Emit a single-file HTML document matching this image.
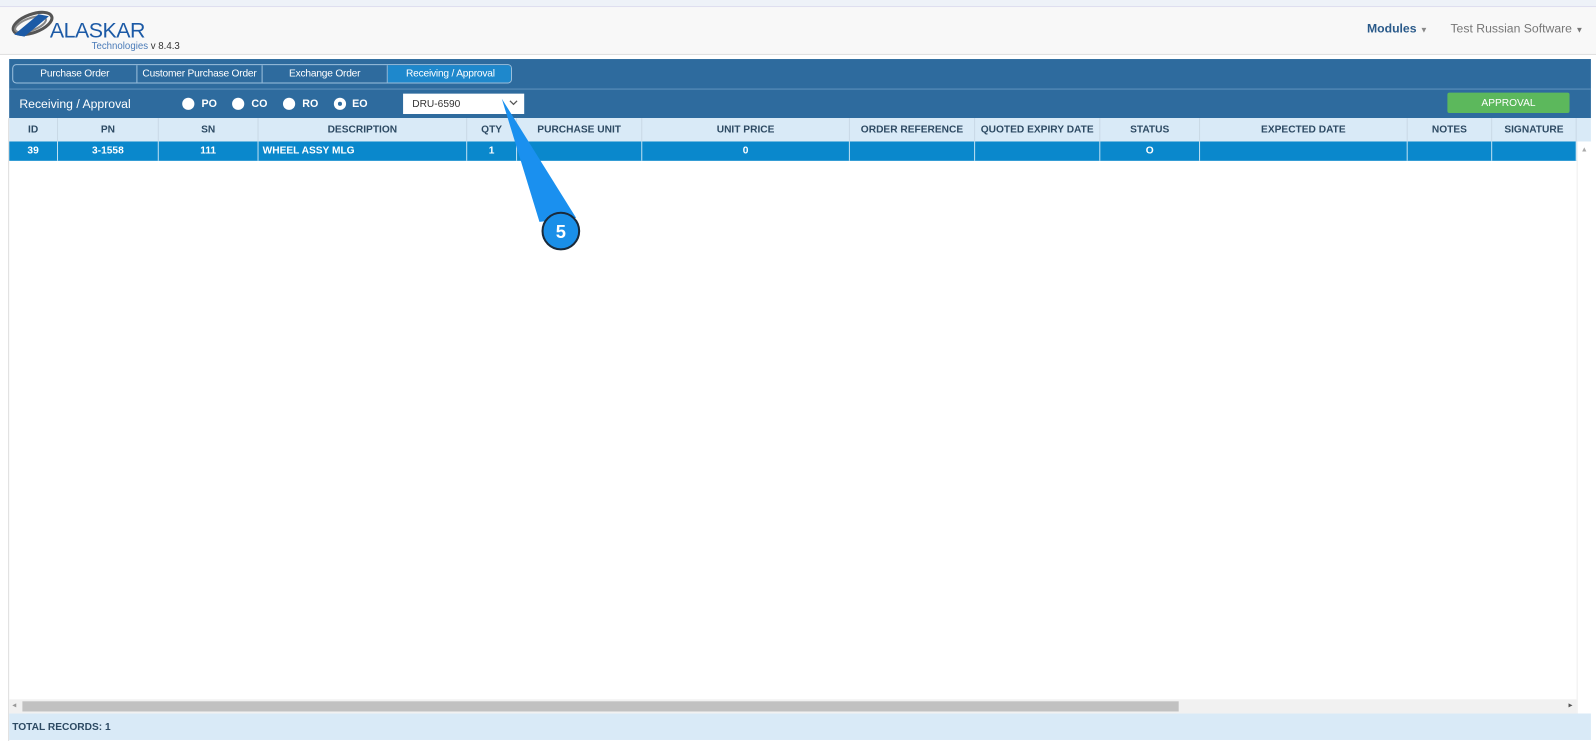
<!DOCTYPE html>
<html><head><style>
*{box-sizing:border-box;margin:0;padding:0}
body{width:1596px;height:741px;background:#fff;font-family:"Liberation Sans",sans-serif;position:relative;overflow:hidden}
#w{position:absolute;left:0;top:0;width:1568px;height:728px;transform:scale(1.01786);transform-origin:0 0}
.abs{position:absolute}
.th,.td{position:absolute;height:100%;border-right:1px solid #c9d9e6;font-size:10px;font-weight:bold;display:flex;align-items:center;justify-content:center;white-space:nowrap}
.th{color:#2d4a63}
.td{color:#fff;border-right:1px solid #bfe0f2}
.tab{position:absolute;top:0;height:17px;color:#fff;font-size:10px;display:flex;align-items:center;justify-content:center;border-right:1px solid #9cc0dd;white-space:nowrap;letter-spacing:-0.2px}
.rad{position:absolute;top:96px;width:12px;height:12px;border-radius:50%;background:#fff}
.rl{position:absolute;top:96px;color:#fff;font-size:10.5px;font-weight:bold}
</style></head><body><div id="w">
<div class="abs" style="left:0;top:0;width:1568px;height:7px;background:#eef2f8;border-bottom:1px solid #dde"></div>
<div class="abs" style="left:0;top:7px;width:1568px;height:47px;background:#f8f8f8;border-bottom:1px solid #e0e0e0"></div>
<svg class="abs" style="left:8px;top:10px" width="45" height="28" viewBox="0 0 45 28"><ellipse cx="24" cy="13" rx="20" ry="9" transform="rotate(-20 24 13)" fill="none" stroke="#555" stroke-width="3"/><ellipse cx="22" cy="14" rx="16" ry="6" transform="rotate(-20 22 14)" fill="none" stroke="#888" stroke-width="2"/><path d="M6 24 L30 4 L40 6 L16 26Z" fill="#1c5aa6"/></svg>
<div class="abs" style="left:49px;top:19px;font-size:21px;color:#1c5aa6;letter-spacing:-0.5px">ALASKAR</div>
<div class="abs" style="left:90px;top:40px;font-size:9.5px;color:#4a7bb8">Technologies <span style="color:#333">v 8.4.3</span></div>
<div class="abs" style="left:1343px;top:21px;font-size:12px;color:#2a5a8a;font-weight:bold">Modules <span style="color:#888;font-size:8px">▼</span></div>
<div class="abs" style="left:1425px;top:21px;font-size:12px;color:#777">Test Russian Software <span style="font-size:8px">▼</span></div>

<div class="abs" style="left:9px;top:58px;width:1554px;height:58px;background:#2e6b9e"></div>
<div class="abs" style="left:9px;top:87px;width:1554px;height:1px;background:#5f93bd"></div>
<div class="abs" style="left:12px;top:63px;width:491px;height:19px;border:1px solid #9cc0dd;border-radius:4px;overflow:hidden">
<div class="tab" style="left:0;width:122px">Purchase Order</div>
<div class="tab" style="left:122px;width:123px">Customer Purchase Order</div>
<div class="tab" style="left:245px;width:123px">Exchange Order</div>
<div class="tab" style="left:368px;width:123px;background:#1e88cc;border-right:0">Receiving / Approval</div>
</div>
<div class="abs" style="left:19px;top:95px;color:#fff;font-size:12px">Receiving / Approval</div>
<div class="rad" style="left:179px"></div><div class="rl" style="left:198px">PO</div>
<div class="rad" style="left:228px"></div><div class="rl" style="left:247px">CO</div>
<div class="rad" style="left:278px"></div><div class="rl" style="left:297px">RO</div>
<div class="rad" style="left:328px"></div><div class="abs" style="left:332px;top:100px;width:4px;height:4px;border-radius:50%;background:#2e6b9e"></div><div class="rl" style="left:346px">EO</div>
<div class="abs" style="left:396px;top:92px;width:119px;height:20px;background:#fff;font-size:10px;color:#333;padding:5px 0 0 9px">DRU-6590<svg style="position:absolute;right:6px;top:6px" width="9" height="6"><path d="M1 1 L4.5 4.5 L8 1" fill="none" stroke="#555" stroke-width="1.2"/></svg></div>
<div class="abs" style="left:1422px;top:91px;width:120px;height:20px;background:#5cb85c;border-radius:2px;color:#fff;font-size:10px;display:flex;align-items:center;justify-content:center">APPROVAL</div>

<div class="abs" style="left:9px;top:116px;width:1554px;height:23px;background:#d9eaf7">
<div class="th" style="left:0;width:48px">ID</div><div class="th" style="left:48px;width:99px">PN</div><div class="th" style="left:147px;width:98px">SN</div><div class="th" style="left:245px;width:205px">DESCRIPTION</div><div class="th" style="left:450px;width:49px">QTY</div><div class="th" style="left:499px;width:123px">PURCHASE UNIT</div><div class="th" style="left:622px;width:204px">UNIT PRICE</div><div class="th" style="left:826px;width:123px">ORDER REFERENCE</div><div class="th" style="left:949px;width:123px">QUOTED EXPIRY DATE</div><div class="th" style="left:1072px;width:98px">STATUS</div><div class="th" style="left:1170px;width:204px">EXPECTED DATE</div><div class="th" style="left:1374px;width:83px">NOTES</div><div class="th" style="left:1457px;width:83px">SIGNATURE</div>
</div>
<div class="abs" style="left:9px;top:139px;width:1540px;height:19px;background:#0a88cc">
<div class="td" style="left:0;width:48px">39</div><div class="td" style="left:48px;width:99px">3-1558</div><div class="td" style="left:147px;width:98px">111</div><div class="td" style="left:245px;width:205px;justify-content:flex-start;padding-left:4px">WHEEL ASSY MLG</div><div class="td" style="left:450px;width:49px">1</div><div class="td" style="left:499px;width:123px"></div><div class="td" style="left:622px;width:204px">0</div><div class="td" style="left:826px;width:123px"></div><div class="td" style="left:949px;width:123px"></div><div class="td" style="left:1072px;width:98px">O</div><div class="td" style="left:1170px;width:204px"></div><div class="td" style="left:1374px;width:83px"></div><div class="td" style="left:1457px;width:83px"></div>
</div>
<div class="abs" style="left:1549px;top:139px;width:14px;height:562px;background:#fff;border-left:1px solid #eee;font-size:7px;color:#aaa;text-align:center;padding-top:5px">▲</div>
<div class="abs" style="left:8px;top:116px;width:1px;height:612px;background:#ddd"></div>
<div class="abs" style="left:9px;top:687px;width:1540px;height:14px;background:#f1f1f1"></div>
<div class="abs" style="left:22px;top:689px;width:1136px;height:10px;background:#c1c1c1"></div>
<div class="abs" style="left:12px;top:688px;font-size:8px;color:#999">◂</div>
<div class="abs" style="left:1541px;top:688px;font-size:8px;color:#555">▸</div>
<div class="abs" style="left:9px;top:701px;width:1554px;height:26px;background:#d9eaf7;font-size:10px;font-weight:bold;color:#2d4a63;padding:8px 0 0 3px">TOTAL RECORDS: 1</div>

<svg class="abs" style="left:0;top:0" width="1568" height="728"><path d="M493 97 L530 218 L566 214Z" fill="#1a90ef"/><circle cx="551" cy="227" r="18" fill="#1a8fe8" stroke="#1a2a3a" stroke-width="2"/><text x="551" y="234" text-anchor="middle" font-family="Liberation Sans" font-weight="bold" font-size="18" fill="#fff">5</text></svg>
</div></body></html>
